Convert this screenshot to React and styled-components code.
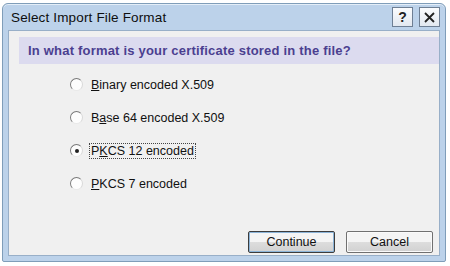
import styled, { createGlobalStyle } from "styled-components"

const Global = createGlobalStyle`
    html, body { margin: 0; padding: 0; background: #ffffff; }
    body { width: 450px; height: 266px; overflow: hidden; font-family: "Liberation Sans", Arial, sans-serif; }
`

const Frame = styled.div`
    margin: 3px 3px 0 2px;
    width: 444px;
    height: 259px;
    background: #bcd2ea;
    border: 1px solid #7f9db9;
    border-radius: 6px 6px 2px 2px;
    box-sizing: border-box;
    display: flex;
    flex-direction: column;
    padding: 0 5px 5px 5px;
    box-shadow: inset 0 1px 0 #e4eef8;
`
const TitleBar = styled.div`
    height: 26px;
    display: flex;
    align-items: center;
    padding: 0 0 0 3px;
`
const Title = styled.div`
    flex: 1;
    font-size: 13.5px;
    color: #0e0e0e;
    letter-spacing: 0.15px;
`
const CapButton = styled.div`
    width: 19px;
    height: 18px;
    margin-left: 6px;
    border: 1px solid #6e7f94;
    background: linear-gradient(#fbfcfe, #e2e8f0);
    display: flex;
    align-items: center;
    justify-content: center;
    font-weight: bold;
    font-size: 14px;
    color: #222;
`
const Body = styled.div`
    flex: 1;
    background: #f0f0f0;
    border: 1px solid #98afc8;
    display: flex;
    flex-direction: column;
    padding: 6px 0 0 10px;
`
const Header = styled.div`
    height: 27px;
    background: #dcdbef;
    color: #4b3f90;
    font-weight: bold;
    font-size: 13px;
    display: flex;
    align-items: center;
    padding-left: 9px;
    letter-spacing: 0.2px;
`
const Options = styled.div`
    display: flex;
    flex-direction: column;
    gap: 16px;
    padding: 12px 0 0 51px;
`
const Option = styled.label`
    display: flex;
    align-items: center;
    gap: 6px;
    font-size: 12.5px;
    color: #111;
    height: 17px;
`
const Radio = styled.span`
    width: 11px;
    height: 11px;
    border-radius: 50%;
    border: 1px solid #8a8a8a;
    border-color: #7a7a7a #d8d8d8 #e8e8e8 #7a7a7a;
    background: #fdfdfd;
    display: flex;
    align-items: center;
    justify-content: center;
    &::after {
        content: "";
        width: 4px;
        height: 4px;
        border-radius: 50%;
        background: ${({checked}) => (checked ? "#222" : "transparent")};
    }
`
const Label = styled.span`
    padding: 0 1px;
    border: 1px dotted ${({focused}) => (focused ? "#444" : "transparent")};
    u { text-decoration: underline; }
`
const Footer = styled.div`
    margin-top: auto;
    display: flex;
    justify-content: flex-end;
    gap: 11px;
    padding: 0 6px 2px 0;
`
const Button = styled.div`
    width: 87px;
    height: 22px;
    box-sizing: border-box;
    border: 1px solid ${({primary}) => (primary ? "#3c3c3c" : "#707070")};
    box-shadow: ${({primary}) => (primary ? "inset 0 0 0 1px #8cb4d8" : "inset 0 0 0 1px #fafafa")};
    background: linear-gradient(#f4f4f4 50%, #dddddd 50%, #d1d1d1);
    border-radius: 2px;
    display: flex;
    align-items: center;
    justify-content: center;
    font-size: 12.5px;
    color: #111;
`

const options = [
    {pre: "", u: "B", rest: "inary encoded X.509"},
    {pre: "B", u: "a", rest: "se 64 encoded X.509"},
    {pre: "P", u: "K", rest: "CS 12 encoded", checked: true},
    {pre: "", u: "P", rest: "KCS 7 encoded"},
]

export default function App() {
    return (
        <>
            <Global />
            <Frame>
                <TitleBar>
                    <Title>Select Import File Format</Title>
                    <CapButton>?</CapButton>
                    <CapButton>
                        <svg width="11" height="11" viewBox="0 0 11 11">
                            <path d="M1 1 L10 10 M10 1 L1 10" stroke="#222" strokeWidth="1.8" />
                        </svg>
                    </CapButton>
                </TitleBar>
                <Body>
                    <Header>In what format is your certificate stored in the file?</Header>
                    <Options>
                        {options.map((o, i) => (
                            <Option key={i}>
                                <Radio checked={o.checked} />
                                <Label focused={o.checked}>{o.pre}<u>{o.u}</u>{o.rest}</Label>
                            </Option>
                        ))}
                    </Options>
                    <Footer>
                        <Button primary>Continue</Button>
                        <Button>Cancel</Button>
                    </Footer>
                </Body>
            </Frame>
        </>
    )
}
